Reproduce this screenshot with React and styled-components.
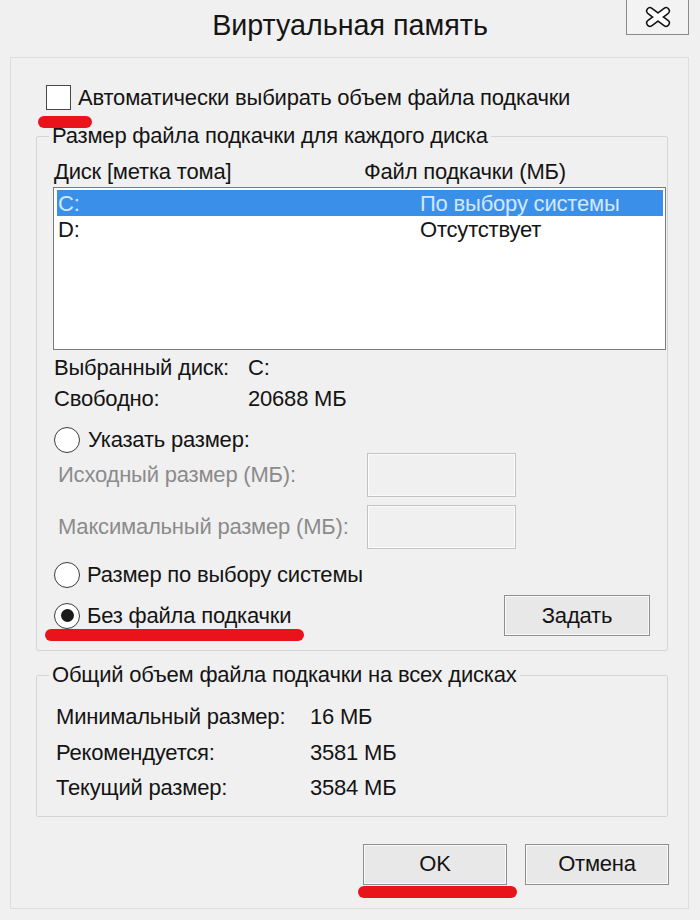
import React from 'react';
import styled, { createGlobalStyle } from 'styled-components';

const GlobalStyle = createGlobalStyle`
  html, body {
    margin: 0;
    padding: 0;
    background: #f0f0f0;
  }
  body {
    font-family: "Liberation Sans", Arial, sans-serif;
    color: #141414;
  }
  * {
    box-sizing: border-box;
  }
`;

const Window = styled.div`
  width: 700px;
  height: 920px;
  display: flex;
  flex-direction: column;
  background: #f0f0f0;
  font-size: 22px;
  letter-spacing: -0.2px;
`;

const TitleBar = styled.header`
  display: grid;
  grid-template-columns: 63px 1fr 63px;
  padding: 0 11px;
  height: 57px;
  flex-shrink: 0;
`;

const Title = styled.h1`
  grid-column: 2;
  margin: 0;
  padding-top: 7px;
  font-size: 28.7px;
  font-weight: 400;
  line-height: 36px;
  letter-spacing: 0;
  text-align: center;
  color: #151515;
`;

const CloseButton = styled.button`
  grid-column: 3;
  height: 35px;
  padding: 0;
  border: 1px solid #8a8a8a;
  border-top: none;
  background: #f3f3f3;
  display: flex;
  align-items: center;
  justify-content: center;
`;

const Panel = styled.main`
  flex: 1;
  margin: 0 11px 11px 10px;
  border: 1px solid #dedede;
  padding: 26px 20px 0 25px;
  display: flex;
  flex-direction: column;
`;

const CheckRow = styled.label`
  position: relative;
  display: flex;
  align-items: center;
  gap: 7px;
  height: 25px;
  margin-left: 10px;
  line-height: 25px;
  padding-top: 1px;
`;

const Checkbox = styled.span`
  width: 25px;
  height: 25px;
  flex-shrink: 0;
  border: 1.5px solid #474747;
  background: #fff;
`;

const Marker = styled.span`
  position: absolute;
  left: ${p => p.$left}px;
  top: ${p => p.$top}px;
  width: ${p => p.$width}px;
  height: 12px;
  border-radius: 6px;
  background: #e8131b;
`;

const GroupBox = styled.fieldset`
  margin: ${p => p.$mt}px 0 0;
  padding: ${p => p.$pt}px 1px ${p => p.$pb}px 16px;
  border: 1px solid #d4d4d4;
  border-radius: 2px;
  min-width: 0;
`;

const Legend = styled.legend`
  margin-left: -4px;
  padding: 0 3px;
  line-height: 28px;
`;

const ColumnsHeader = styled.div`
  display: grid;
  grid-template-columns: 310px 1fr;
  padding-left: 1px;
  line-height: 28px;
`;

const ListBox = styled.div`
  margin-top: 1px;
  height: 163px;
  border: 1px solid #7b7b7b;
  background: #fff;
  padding: 2px 2px 2px 3px;
`;

const ListRow = styled.div`
  display: grid;
  grid-template-columns: 362px 1fr;
  height: 26px;
  line-height: 27px;
  padding-left: 1px;
  background: ${p => (p.$selected ? '#3a90e8' : 'transparent')};
  color: ${p => (p.$selected ? '#d3e7ff' : '#141414')};
`;

const InfoGrid = styled.div`
  display: grid;
  grid-template-columns: 194px 1fr;
  margin: 2px 0 0 1px;
  line-height: 31px;
`;

const RadioRow = styled.label`
  display: flex;
  align-items: center;
  gap: ${p => p.$gap || 7}px;
  height: 25px;
  margin-top: ${p => p.$mt}px;
  margin-left: 1px;
  line-height: 25px;
`;

const Radio = styled.span`
  position: relative;
  width: 26px;
  height: 26px;
  flex-shrink: 0;
  border-radius: 50%;
  border: 1.5px solid #3c3c3c;
  background: #fff;

  &::after {
    content: '';
    display: ${p => (p.$checked ? 'block' : 'none')};
    position: absolute;
    left: 50%;
    top: 50%;
    width: 13px;
    height: 13px;
    margin: -6.5px 0 0 -6.5px;
    border-radius: 50%;
    background: #1b1b1b;
  }
`;

const SizeGrid = styled.div`
  display: grid;
  grid-template-columns: 309px 149px;
  grid-auto-rows: 44px;
  row-gap: 8px;
  align-items: center;
  margin: 1px 0 0 5px;
`;

const DisabledLabel = styled.span`
  color: #8b8b8b;
`;

const DisabledInput = styled.div`
  height: 44px;
  border: 1px solid #c3c3c3;
  background: #f0f0f0;
  box-shadow: inset 0 0 0 1px #fbfbfb;
`;

const ActionRow = styled.div`
  position: relative;
  display: flex;
  align-items: center;
  justify-content: space-between;
  height: 41px;
  margin-top: 8px;
`;

const Button = styled.button`
  width: ${p => p.$width}px;
  height: 41px;
  margin-right: ${p => p.$mr || 0}px;
  padding: 0;
  border: 1px solid #8f8f8f;
  background: #e8e8e8;
  box-shadow: inset 0 0 0 1px #f9f9f9;
  font: inherit;
  letter-spacing: inherit;
  color: #141414;
`;

const SummaryGrid = styled.div`
  display: grid;
  grid-template-columns: 254px 1fr;
  margin-left: 3px;
  line-height: 35.5px;
`;

const ButtonBar = styled.div`
  display: flex;
  justify-content: flex-end;
  gap: 18px;
  margin: 27px -1px 0 0;
`;

const ButtonWrap = styled.div`
  position: relative;
`;

const CloseIcon = () => (
  <svg width="30" height="24" viewBox="0 0 30 24">
    <g strokeLinecap="round" fill="none">
      <path d="M7 6 L23 18 M23 6 L7 18" stroke="#111" strokeWidth="8" />
      <path d="M7 6 L23 18 M23 6 L7 18" stroke="#fff" strokeWidth="5" />
    </g>
  </svg>
);

const drives = [
  { name: 'C:', size: 'По выбору системы', selected: true },
  { name: 'D:', size: 'Отсутствует', selected: false },
];

const summary = [
  ['Минимальный размер:', '16 МБ'],
  ['Рекомендуется:', '3581 МБ'],
  ['Текущий размер:', '3584 МБ'],
];

export default function App() {
  return (
    <>
      <GlobalStyle />
      <Window>
        <TitleBar>
          <Title>Виртуальная память</Title>
          <CloseButton aria-label="Закрыть">
            <CloseIcon />
          </CloseButton>
        </TitleBar>

        <Panel>
          <CheckRow>
            <Checkbox />
            Автоматически выбирать объем файла подкачки
            <Marker $left={-8} $top={32} $width={54} />
          </CheckRow>

          <GroupBox $mt={13} $pt={8} $pb={14}>
            <Legend>Размер файла подкачки для каждого диска</Legend>
            <ColumnsHeader>
              <span>Диск [метка тома]</span>
              <span>Файл подкачки (МБ)</span>
            </ColumnsHeader>
            <ListBox>
              {drives.map(d => (
                <ListRow key={d.name} $selected={d.selected}>
                  <span>{d.name}</span>
                  <span>{d.size}</span>
                </ListRow>
              ))}
            </ListBox>

            <InfoGrid>
              <span>Выбранный диск:</span>
              <span>C:</span>
              <span>Свободно:</span>
              <span>20688 МБ</span>
            </InfoGrid>

            <RadioRow $mt={13} $gap={8}>
              <Radio />
              Указать размер:
            </RadioRow>
            <SizeGrid>
              <DisabledLabel>Исходный размер (МБ):</DisabledLabel>
              <DisabledInput />
              <DisabledLabel>Максимальный размер (МБ):</DisabledLabel>
              <DisabledInput />
            </SizeGrid>

            <RadioRow $mt={13}>
              <Radio />
              Размер по выбору системы
            </RadioRow>
            <ActionRow>
              <RadioRow $mt={0}>
                <Radio $checked />
                Без файла подкачки
              </RadioRow>
              <Button $width={146} $mr={16}>Задать</Button>
              <Marker $left={-8} $top={34} $width={259} />
            </ActionRow>
          </GroupBox>

          <GroupBox $mt={10} $pt={10} $pb={10}>
            <Legend>Общий объем файла подкачки на всех дисках</Legend>
            <SummaryGrid>
              {summary.map(([label, value]) => (
                <React.Fragment key={label}>
                  <span>{label}</span>
                  <span>{value}</span>
                </React.Fragment>
              ))}
            </SummaryGrid>
          </GroupBox>

          <ButtonBar>
            <ButtonWrap>
              <Button $width={144}>OK</Button>
              <Marker $left={-5} $top={42} $width={159} />
            </ButtonWrap>
            <Button $width={144}>Отмена</Button>
          </ButtonBar>
        </Panel>
      </Window>
    </>
  );
}
